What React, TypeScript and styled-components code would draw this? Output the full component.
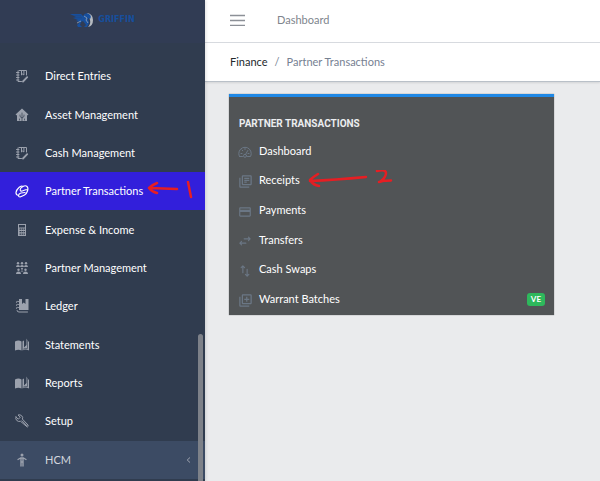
import React from "react";
import styled, { createGlobalStyle, css } from "styled-components";
import {
  MdOutlineLibraryBooks,
  MdOutlineCreditCard,
  MdOutlineLibraryAdd,
} from "react-icons/md";

const GlobalStyle = createGlobalStyle`
  *, *::before, *::after { box-sizing: border-box; }
  body {
    margin: 0;
    background: #eaebed;
    font-family: Lato, "Noto Sans", sans-serif;
    font-size: 11px;
    line-height: 16px;
    color: #23282c;
  }
  ul, ol, h2 { margin: 0; padding: 0; list-style: none; }
  a { color: inherit; text-decoration: none; }
`;

const Page = styled.div`
  display: flex;
  height: 100vh;
  overflow: hidden;
`;

const Sidebar = styled.aside`
  position: relative;
  flex: 0 0 205px;
  display: flex;
  flex-direction: column;
  background: #303c4f;
  z-index: 1;
  box-shadow: 1px 0 3px rgba(0, 0, 0, 0.12);
`;

const Brand = styled.a`
  display: flex;
  align-items: center;
  justify-content: center;
  gap: 4px;
  flex: 0 0 43px;
  padding-bottom: 3px;
  background: #313c54;
  color: #174f9d;
  font-family: "DejaVu Sans", Verdana, sans-serif;
  font-size: 8px;
  font-weight: 700;
`;

const NavList = styled.ul`
  flex: 1;
  display: grid;
  grid-auto-rows: 1fr;
  padding: 14px 0 2px;
`;

const NavLink = styled.a<{ $state?: "active" | "group" }>`
  position: relative;
  display: flex;
  align-items: center;
  gap: 16px;
  height: 100%;
  padding: 0 14px 0 15px;
  color: #fff;
  svg { flex: none; color: #9ba1ad; }
  ${({ $state }) => $state === "active" && css`
    background: #321fdb;
    svg { color: #fff; }
  `}
  ${({ $state }) => $state === "group" && css`
    background: #3c4b64;
    color: #d3d7de;
  `}
`;

const NavLabel = styled.span`
  flex: 1;
  white-space: nowrap;
`;

const ScrollThumb = styled.div`
  position: absolute;
  top: 334px;
  right: 2px;
  bottom: 0;
  width: 5px;
  border-radius: 3px 3px 0 0;
  background: #7d8189;
`;

const Main = styled.main`
  flex: 1;
  min-width: 0;
`;

const TopBar = styled.header`
  display: flex;
  align-items: center;
  gap: 32px;
  height: 43px;
  padding: 0 25px 2px;
  background: #fff;
  border-bottom: 1px solid #d8dbe0;
  color: #7e858d;
`;

const MenuButton = styled.button`
  display: flex;
  padding: 0;
  border: 0;
  background: none;
  color: #8c9097;
`;

const Breadcrumb = styled.ol`
  display: flex;
  align-items: center;
  gap: 7px;
  height: 39px;
  padding: 0 25px;
  background: #fff;
  border-bottom: 1px solid #b9c0c8;
  box-shadow: 0 1px 2px rgba(0, 0, 0, 0.1);
  color: #768192;
  a { color: #23282c; }
`;

const Content = styled.div`
  padding: 12px 24px;
`;

const Card = styled.section`
  max-width: 325px;
  padding: 18px 9px 1px;
  background: #515456;
  border-top: 3px solid #1f88e5;
  box-shadow: 0 0 1px #777;
`;

const CardTitle = styled.h2`
  padding: 0 1px 1px;
  color: #ebedef;
  font-family: Roboto, sans-serif;
  font-size: 10px;
  line-height: 17px;
  font-weight: 700;
  text-transform: uppercase;
`;

const CardList = styled.ul`
  display: grid;
  grid-auto-rows: 1fr;
  height: 178px;
  margin-top: 3px;
`;

const CardLink = styled.a`
  position: relative;
  display: flex;
  align-items: center;
  gap: 7px;
  height: 100%;
  color: #fff;
  svg { flex: none; color: #6b7785; }
`;

const IconSlot = styled.span`
  display: flex;
  justify-content: center;
  width: 14px;
  padding-top: 3px;
`;

const Badge = styled.span`
  margin-left: auto;
  padding: 0 4px;
  border-radius: 3px;
  background: #2eb85c;
  color: #fff;
  font-size: 8px;
  line-height: 13px;
  font-weight: 700;
`;

const Mark = styled.svg<{ $left: number }>`
  && {
    position: absolute;
    left: ${({ $left }) => $left}px;
    top: 50%;
    transform: translateY(-50%);
    fill: none;
    color: #e61e23;
    stroke: currentColor;
    stroke-width: 2.5;
    stroke-linecap: round;
    stroke-linejoin: round;
  }
`;

const Line = ({ size = 14, children }: { size?: number; children: React.ReactNode }) => (
  <svg width={size} height={size} viewBox="0 0 14 14" fill="none" stroke="currentColor" strokeLinecap="round" strokeLinejoin="round" aria-hidden="true">
    {children}
  </svg>
);

const NotebookEdit = () => (
  <Line>
    <path d="M4 1.5h7.5V6M3 2v10.5h3.5M1.5 3.5H4M1.5 6H4M1.5 8.5H4M1.5 11H4M6.5 2v4l1.2-1 1.2 1V2" />
    <path d="M8 12.5l4.2-4.3" strokeWidth="1.8" />
  </Line>
);

const HomeGroup = () => (
  <Line>
    <path fill="currentColor" stroke="none" d="M7 .5L13.5 6.5 12 7.5V13H2V7.5L.5 6.5z" />
    <path stroke="#303c4f" strokeWidth=".7" d="M7 5v8M5 7v1.500L7 10l2-1.500V7M4.500 12v-1M9.500 12v-1" />
  </Line>
);

const Handshake = () => (
  <Line>
    <path d="M3.5 11.5Q.8 11 1 8.5T4 3.5Q6 1.5 8 2.5 10.5 1 12 2.5T12.5 7 9.5 11 5 13Q3.5 13 3.5 11.5M8 2.5Q5 4 5.2 6T8.5 6.5Q11 5.5 12.5 5.5M3.5 11.5Q3.8 9.5 6 9T10 8.5" strokeWidth="1.2" />
  </Line>
);

const Calculator = () => (
  <Line>
    <path fill="currentColor" stroke="none" fillRule="evenodd" d="M3 1h8v12H3zM4 2v2.5h6V2zM4.5 5.5v1.3H6V5.5zm2 0v1.3H8V5.5zm2 0v1.3H10V5.5zM4.5 8v1.3H6V8zm2 0v1.3H8V8zm2 0v1.3H10V8zm-4 2.5v1.3H6v-1.3zm2 0v1.3H8v-1.3zm2 0v1.3H10v-1.3z" />
  </Line>
);

const People = () => (
  <Line>
    <g fill="currentColor" stroke="none">
      <circle cx="3" cy="2.2" r="1.2" /><circle cx="7" cy="2.2" r="1.2" /><circle cx="11" cy="2.2" r="1.2" />
      <path d="M1 6q0-2 2-2t2 2q0-2 2-2t2 2q0-2 2-2t2 2z" />
      <circle cx="3.5" cy="8.8" r="1.2" /><circle cx="10.5" cy="8.8" r="1.2" /><circle cx="7" cy="7.8" r="1" />
      <path d="M1 13q0-2.5 2.5-2.5T6 13zM8 13q0-2.5 2.5-2.5T13 13zM5.5 10.5Q7 8.5 8.5 10.5z" />
    </g>
  </Line>
);

const Ledger = () => (
  <Line>
    <path fill="currentColor" stroke="none" d="M4 0h3v5l1.7-1.4L10.5 5V0H13.5v11H4z" />
    <path d="M3.5 2.5q-3-.5-2 1M3.5 5.5q-3-.5-2 1M3.5 8.5q-3-.5-2 1M2 11.5q0 1.500 2 1.500h8.500" />
  </Line>
);

const OpenBook = () => (
  <Line>
    <path fill="currentColor" stroke="none" d="M0 3.5Q3.5 1.7 6.5 3.5v9Q3.5 11 0 12.5zM8 3l1-.5v7L11.5 7V.5L13 3.5h1v9q-3.5-1.8-6.5 0V3.5z" />
    <path stroke="#303c4f" strokeWidth=".6" d="M12.500 3v7.500q-2.500-.5-4 .5" />
  </Line>
);

const Wrench = () => (
  <Line>
    <path d="M1 3l2.3 2.2 2-2L3 1q2-.8 3.7.8T7.3 5l5.700 6q.6 1.500-.7 2L5.500 7.300Q3.500 8 1.800 6.500T1 3zM7 6.800l4.800 4.800" />
  </Line>
);

const Person = () => (
  <Line>
    <circle cx="7" cy="2" r="1.5" fill="currentColor" stroke="none" />
    <path d="M3 6.5L5.5 5h3L11 6.5M6 5.5v7.5M8 5.5v7.5M6 9h2" strokeWidth="1.4" />
  </Line>
);

const Gauge = () => (
  <Line>
    <path d="M1.5 11.5Q.8 10 .8 8.5a6.2 6.2 0 0 1 12.4 0q0 1.5-.7 3h-3M1.5 11.5h3M3 8.5h1M4 5l.8.8M7 3.5v1M11 8.5h-1" />
    <path d="M9.8 5.5L7.5 9.5" /><circle cx="7" cy="10.8" r="1.5" />
  </Line>
);

const Transfer = () => (
  <Line size={12}>
    <path d="M6 4.5h7M11 2.5l2 2-2 2M8 9.5H1M3 7.5l-2 2 2 2" strokeWidth="1.3" />
  </Line>
);

const Swap = () => (
  <Line size={12}>
    <path d="M4.5 9V1M2.5 3l2-2 2 2M9.5 5v8M7.5 11l2 2 2-2" strokeWidth="1.3" />
  </Line>
);

const Griffin = () => (
  <svg width="24" height="15" viewBox="0 0 24 15" aria-hidden="true">
    <path fill="#b5bac1" d="M17 0q6 1 6 7t-5 7q3-3 2-7t-3-7z" />
    <path fill="#174f9d" d="M0 1h11l2 2q2-4 6-2 3 2 1 5l-2-1 1 5-2 4h-3l2-2-3-4-2 1-1 3 2 2H8l-1-2 3-3-4-1 2-1-5-2 3-1z" />
    <path fill="none" stroke="#a8b0bd" strokeWidth=".7" d="M14 3l3 2-1 2 2 3M7 10l4-2" />
    <path fill="none" stroke="#313c54" strokeWidth=".3" d="M2 2.8h9M4 4.7h8" />
  </svg>
);

const navItems: { label: string; Icon: () => React.JSX.Element; state?: "active" | "group" }[] = [
  { label: "Direct Entries", Icon: NotebookEdit },
  { label: "Asset Management", Icon: HomeGroup },
  { label: "Cash Management", Icon: NotebookEdit },
  { label: "Partner Transactions", Icon: Handshake, state: "active" },
  { label: "Expense & Income", Icon: Calculator },
  { label: "Partner Management", Icon: People },
  { label: "Ledger", Icon: Ledger },
  { label: "Statements", Icon: OpenBook },
  { label: "Reports", Icon: OpenBook },
  { label: "Setup", Icon: Wrench },
  { label: "HCM", Icon: Person, state: "group" },
];

const cardItems = [
  { label: "Dashboard", icon: <Gauge /> },
  { label: "Receipts", icon: <MdOutlineLibraryBooks size={15} /> },
  { label: "Payments", icon: <MdOutlineCreditCard size={14} /> },
  { label: "Transfers", icon: <Transfer /> },
  { label: "Cash Swaps", icon: <Swap /> },
  { label: "Warrant Batches", icon: <MdOutlineLibraryAdd size={15} />, badge: "VE" },
];

export default function App() {
  return (
    <>
      <GlobalStyle />
      <Page>
        <Sidebar>
          <Brand href="#"><Griffin />GRIFFIN</Brand>
          <NavList>
            {navItems.map(({ label, Icon, state }) => (
              <li key={label}>
                <NavLink href="#" $state={state}>
                  <Icon />
                  <NavLabel>{label}</NavLabel>
                  {state === "group" && (
                    <svg width="5" height="6" viewBox="0 0 5 6" fill="none" stroke="currentColor" aria-hidden="true">
                      <path d="M4 .5L1.2 3 4 5.5" />
                    </svg>
                  )}
                  {state === "active" && (
                    <Mark $left={147} width="48" height="20" viewBox="0 0 48 20" aria-hidden="true">
                      <path d="M10 2Q5 4 2 7q3 4 8 5M2 7q13 .5 28 1M41 1l3 15" />
                    </Mark>
                  )}
                </NavLink>
              </li>
            ))}
          </NavList>
          <ScrollThumb />
        </Sidebar>
        <Main>
          <TopBar>
            <MenuButton type="button" aria-label="Toggle sidebar">
              <svg width="15" height="12" viewBox="0 0 15 12" stroke="currentColor" strokeWidth="1.3" aria-hidden="true">
                <path d="M0 1.5h15M0 6.5h15M0 11.300h15" />
              </svg>
            </MenuButton>
            <a href="#">Dashboard</a>
          </TopBar>
          <Breadcrumb>
            <li><a href="#">Finance</a></li>
            <li aria-hidden="true">/</li>
            <li>Partner Transactions</li>
          </Breadcrumb>
          <Content>
            <Card>
              <CardTitle>Partner Transactions</CardTitle>
              <CardList>
                {cardItems.map(({ label, icon, badge }) => (
                  <li key={label}>
                    <CardLink href="#">
                      <IconSlot>{icon}</IconSlot>
                      <span>{label}</span>
                      {badge && <Badge>{badge}</Badge>}
                      {label === "Receipts" && (
                        <Mark $left={70} width="86" height="20" viewBox="0 0 86 20" aria-hidden="true">
                          <path d="M10 4Q5 7 2 10q3 5 9 6M2 11q24-1 56-4M69 1q9-2 9 2t-5 8l10-.5M71 12l4-1" />
                        </Mark>
                      )}
                    </CardLink>
                  </li>
                ))}
              </CardList>
            </Card>
          </Content>
        </Main>
      </Page>
    </>
  );
}
